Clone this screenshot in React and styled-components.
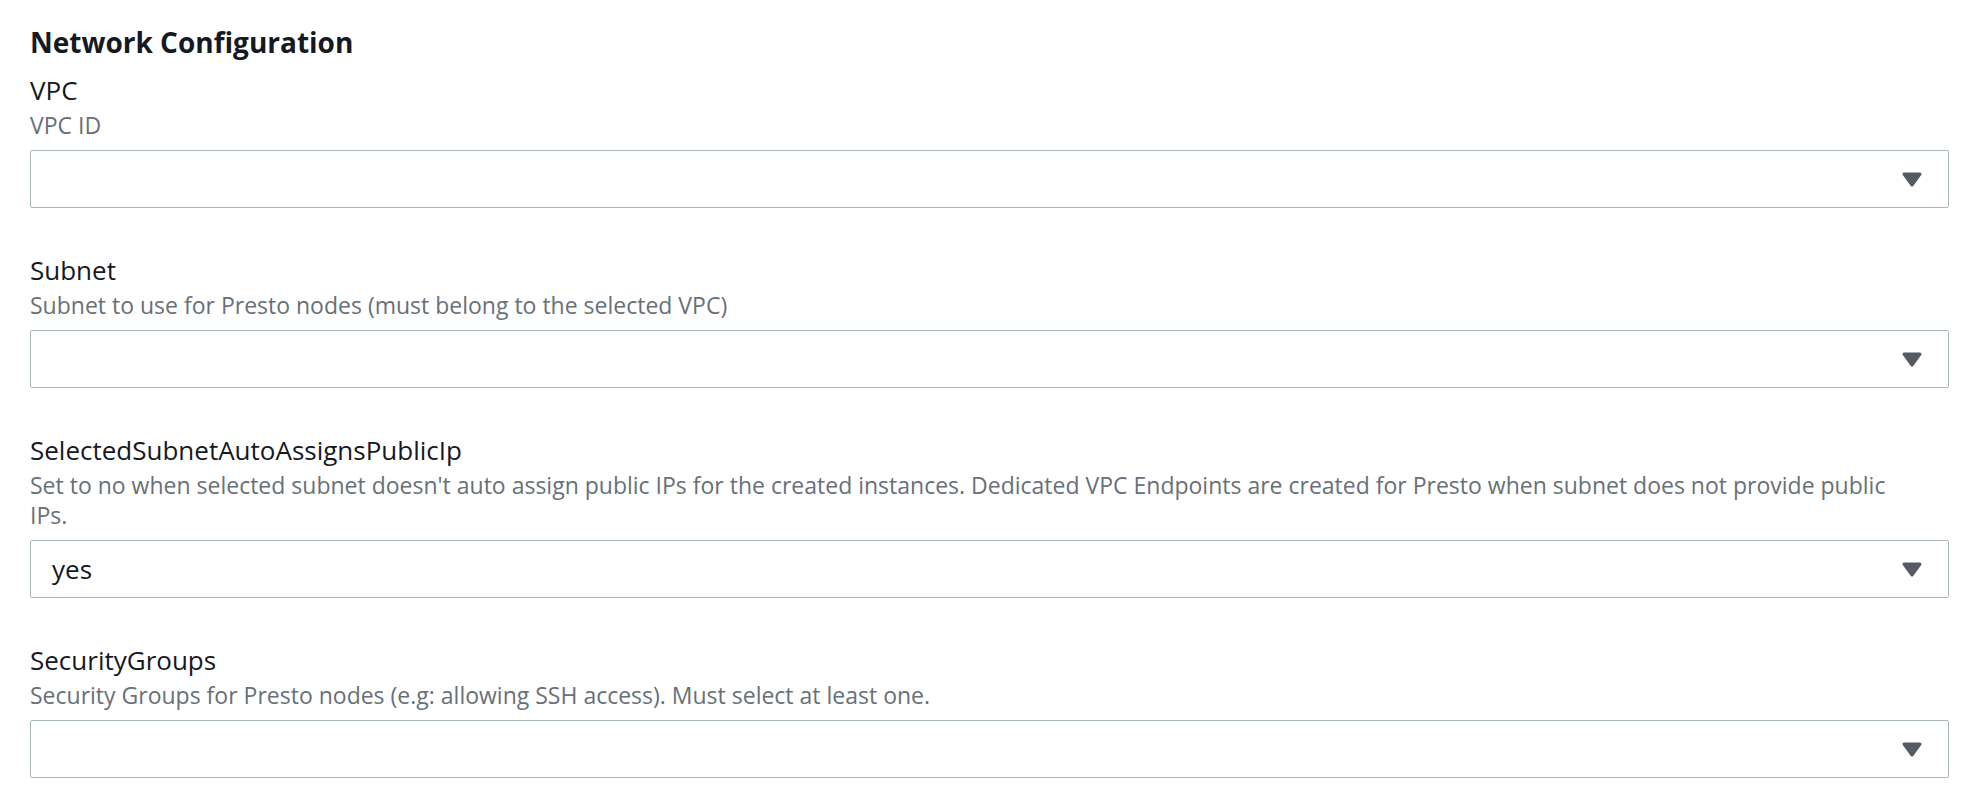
import React from "react";
import styled, { createGlobalStyle } from "styled-components";

const GlobalStyle = createGlobalStyle`
  html, body {
    margin: 0;
    padding: 0;
    background: #ffffff;
  }
  body {
    font-family: "Open Sans", "Noto Sans", "Liberation Sans", sans-serif;
    color: #16191f;
  }
`;

const Page = styled.div`
  padding: 24px 25px 0 30px;
  display: flex;
  flex-direction: column;
`;

const Heading = styled.h2`
  margin: 0 0 10px;
  font-size: 28px;
  line-height: 36px;
  font-weight: 700;
  color: #16191f;
`;

const Fields = styled.div`
  display: flex;
  flex-direction: column;
  gap: 42px;
`;

const Field = styled.div`
  display: flex;
  flex-direction: column;
`;

const Label = styled.label`
  font-size: 26px;
  line-height: 40px;
  color: #16191f;
`;

const Description = styled.div`
  font-size: 23px;
  line-height: 30px;
  color: #687078;
  padding-right: 30px;
`;

const Select = styled.div`
  margin-top: 10px;
  height: 58px;
  box-sizing: border-box;
  border: 1px solid #aab7b8;
  border-radius: 2px;
  display: flex;
  align-items: center;
  justify-content: space-between;
  padding: 0 25px 0 21px;
  font-size: 26px;
  color: #16191f;
`;

const Value = styled.span`
  line-height: 1;
`;

const Caret = () => (
  <svg width="22" height="17" viewBox="0 0 22 17">
    <path
      d="M3 3 L19 3 L11 14 Z"
      fill="#545b64"
      stroke="#545b64"
      strokeWidth="3"
      strokeLinejoin="round"
    />
  </svg>
);

const fields = [
  { label: "VPC", desc: "VPC ID", value: "" },
  {
    label: "Subnet",
    desc: "Subnet to use for Presto nodes (must belong to the selected VPC)",
    value: "",
  },
  {
    label: "SelectedSubnetAutoAssignsPublicIp",
    desc: "Set to no when selected subnet doesn't auto assign public IPs for the created instances. Dedicated VPC Endpoints are created for Presto when subnet does not provide public IPs.",
    value: "yes",
  },
  {
    label: "SecurityGroups",
    desc: "Security Groups for Presto nodes (e.g: allowing SSH access). Must select at least one.",
    value: "",
  },
];

export default function App() {
  return (
    <>
      <GlobalStyle />
      <Page>
        <Heading>Network Configuration</Heading>
        <Fields>
          {fields.map((f) => (
            <Field key={f.label}>
              <Label>{f.label}</Label>
              <Description>{f.desc}</Description>
              <Select>
                <Value>{f.value}</Value>
                <Caret />
              </Select>
            </Field>
          ))}
        </Fields>
      </Page>
    </>
  );
}
